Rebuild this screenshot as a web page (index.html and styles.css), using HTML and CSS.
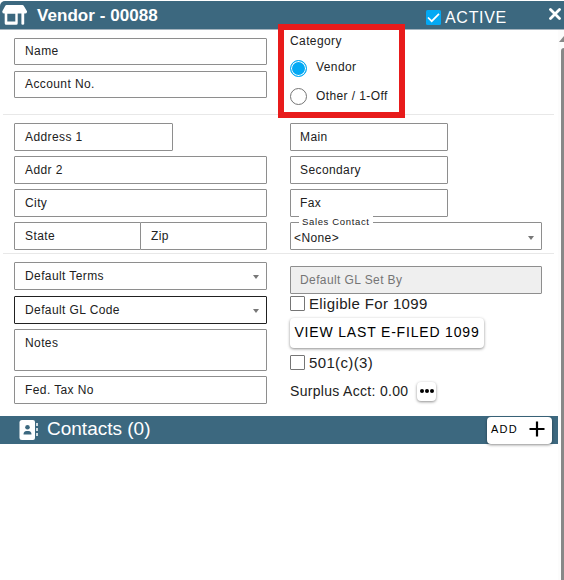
FILE: index.html
```html
<!DOCTYPE html>
<html lang="en">
<head>
<meta charset="utf-8">
<title>Vendor - 00088</title>
<link rel="stylesheet" href="styles.css">
</head>
<body>
<main class="dialog">
  <header class="titlebar">
    <svg class="store" viewBox="0 0 25 21" width="25" height="21" fill="#fff"><path d="M4.500 0h16q.8 0 1.200.7L25 6.200Q25.200 8.500 23 8.500H2.500Q0 8.500.3 6.200L3.300.7Q3.700 0 4.500 0z"/><path fill-rule="evenodd" d="M2.700 8h13v10.200q0 1.500-1.500 1.500h-10q-1.500 0-1.500-1.500zM5.300 8.500v8h8v-8zM19.400 8h2.800v11q0 .8-1.400.8t-1.400-.8z"/></svg>
    <h1 class="title">Vendor - 00088</h1>
    <label class="active"><svg viewBox="0 0 15 15" width="15" height="15"><rect width="15" height="15" rx="1.500" fill="#03a9f4"/><path d="M2 7.500l3.700 3.700L13 3.800" fill="none" stroke="#fff" stroke-width="1.700"/></svg><span>ACTIVE</span></label>
    <svg class="close" viewBox="0 0 12 12" width="12" height="12"><path d="M1.500 1.500l9 9m0-9l-9 9" stroke="#fff" stroke-width="2.800" stroke-linecap="round"/></svg>
  </header>
  <div class="content">
    <section class="section identity">
      <div class="column">
        <div class="field">Name</div>
        <div class="field">Account No.</div>
      </div>
      <div class="category">
        <div class="legend">Category</div>
        <div class="option"><i class="radio checked"></i><span>Vendor</span></div>
        <div class="option"><i class="radio"></i><span>Other / 1-Off</span></div>
      </div>
    </section>
    <section class="section address">
      <div class="column">
        <div class="field street">Address 1</div>
        <div class="field">Addr 2</div>
        <div class="field">City</div>
        <div class="split"><div class="field state">State</div><div class="field zip">Zip</div></div>
      </div>
      <div class="column phones">
        <div class="field phone">Main</div>
        <div class="field phone">Secondary</div>
        <div class="field phone">Fax</div>
        <div class="field select sales"><span class="floating">Sales Contact</span><span>&lt;None&gt;</span><i class="caret"></i></div>
      </div>
    </section>
    <section class="section accounting">
      <div class="column">
        <div class="field select terms">Default Terms<i class="caret"></i></div>
        <div class="field select focused">Default GL Code<i class="caret"></i></div>
        <div class="field notes">Notes</div>
        <div class="field">Fed. Tax No</div>
      </div>
      <div class="tax">
        <div class="field disabled">Default GL Set By</div>
        <label class="check eligible"><i class="box"></i><span>Eligible For 1099</span></label>
        <button class="button view">VIEW LAST E-FILED 1099</button>
        <label class="check charity"><i class="box"></i><span>501(c)(3)</span></label>
        <div class="surplus"><span>Surplus Acct: 0.00</span><button class="button more"><i></i><i></i><i></i></button></div>
      </div>
    </section>
    <section class="contacts">
      <svg class="book" viewBox="0 0 20 20" width="20" height="20"><path d="M3 0h11q2 0 2 2v16q0 2-2 2H3q-2.500 0-2.500-2.500v-15Q.5 0 3 0z" fill="#fff"/><path d="M18 3v3m0 2v3m0 2v3" stroke="#fff" stroke-width="1.500"/><circle cx="8.500" cy="7.300" r="2.300" fill="#3c687f"/><path d="M4.500 14.500q0-3.500 3-3.500h2q3 0 3 3.500z" fill="#3c687f"/></svg>
      <h2>Contacts (0)</h2>
      <button class="button add"><span>ADD</span><svg viewBox="0 0 16 16" width="16" height="16"><path d="M8 .5v15M.5 8h15" stroke="#000" stroke-width="2.200"/></svg></button>
    </section>
  </div>
  <div class="scrollbar"><i class="up"></i><i class="thumb"></i></div>
</main>
</body>
</html>
```
FILE: styles.css
```css
* { box-sizing: border-box; }
body {
  margin: 0;
  background: #fff;
  color: #212121;
  font: 12px/14px "Liberation Sans", Arial, sans-serif;
  letter-spacing: 0.4px;
}
.dialog {
  position: relative;
  height: 580px;
  overflow: hidden;
}
.titlebar {
  display: flex;
  align-items: flex-start;
  height: 29px;
  margin-top: 1px;
  padding: 4px 3px 0 2px;
  background: #3c687f;
  border-bottom: 1px solid #a4b3bd;
  border-top-left-radius: 5px;
  color: #fff;
}
.title {
  flex: 1;
  margin: 1px 0 0 10px;
  font-size: 17px;
  line-height: 20px;
  letter-spacing: 0.05px;
}
.active {
  display: flex;
  gap: 4px;
  margin: 4px 42px 0 0;
  font-size: 16px;
  line-height: 18px;
  letter-spacing: 0.7px;
}
.active svg { margin-top: 1px; }
.close { margin-top: 3px; }
.content { width: 558px; }
.section {
  display: grid;
  grid-template-columns: 253px 252px;
  column-gap: 23px;
  width: 551px;
  margin-left: 3px;
  padding-left: 11px;
  border-bottom: 1px solid #e8e8e8;
}
.identity { height: 85px; padding-top: 8px; }
.address { height: 139px; padding-top: 8px; }
.accounting { height: 162px; padding-top: 8px; border-bottom: 0; }
.column {
  display: flex;
  flex-direction: column;
  gap: 5px;
}
.identity .column { gap: 6px; }
.field {
  flex: none;
  height: 28px;
  padding: 6px 10px;
  border: 1px solid #8e8e8e;
  border-radius: 1px;
}
.identity .field { height: 27px; padding-top: 5px; }
.street { width: 159px; }
.split { display: flex; }
.state { width: 127px; }
.zip { width: 127px; margin-left: -1px; }
.phones .field { padding-left: 9px; }
.phone { width: 158px; }
.select {
  position: relative;
  display: flex;
  justify-content: space-between;
}
.terms { margin-bottom: 1px; }
.focused { border-color: #212121; }
.notes { height: 42px; }
.caret {
  width: 0;
  height: 0;
  margin: 6px -3px 0 0;
  border: 3.5px solid transparent;
  border-top: 4px solid #777;
  border-bottom: 0;
}
.phones .sales { padding: 8px 10px 0 3px; }
.sales .caret { margin-top: 5px; }
.floating {
  position: absolute;
  top: -7px;
  left: 8px;
  padding: 0 3px;
  background: #fff;
  font-size: 9.5px;
  line-height: 12px;
  letter-spacing: 0.65px;
}
.category {
  position: relative;
  z-index: 1;
  width: 127px;
  height: 94px;
  margin: -14px 0 0 -12px;
  padding: 4px 0 0 6px;
  border: 6px solid #e81b1b;
}
.legend { margin-bottom: 4px; }
.option {
  display: flex;
  align-items: center;
  gap: 9px;
  height: 29px;
}
.radio {
  width: 17px;
  height: 17px;
  margin-top: 1px;
  border: 1px solid #757575;
  border-radius: 50%;
}
.checked {
  margin-top: 3px;
  border-color: #03a9f4;
  background: #03a9f4;
  box-shadow: inset 0 0 0 1px #fff;
}
.tax { padding-top: 4px; }
.disabled {
  padding-left: 9px;
  background: #efefef;
  color: #757575;
}
.check {
  display: flex;
  gap: 4px;
  font-size: 15px;
  line-height: 17px;
  letter-spacing: 0.36px;
}
.box {
  width: 15px;
  height: 15px;
  border: 1px solid #757575;
  border-radius: 1px;
}
.eligible { margin-top: 2px; height: 15px; }
.charity { margin-top: 7px; height: 15px; }
.check span { margin-top: -1px; }
.button {
  display: flex;
  align-items: center;
  justify-content: center;
  padding: 0;
  border: 0;
  border-radius: 4px;
  background: #fff;
  color: #000;
  font-family: inherit;
  white-space: nowrap;
  box-shadow: 0 1px 3px rgba(0, 0, 0, 0.45);
}
.view {
  width: 194px;
  height: 30px;
  margin-top: 7px;
  padding-bottom: 2px;
  font-size: 14px;
  letter-spacing: 0.82px;
}
.surplus {
  display: flex;
  align-items: center;
  gap: 9px;
  height: 20px;
  margin-top: 11px;
  font-size: 14px;
  letter-spacing: 0.31px;
}
.more { width: 19px; height: 19px; gap: 1px; }
.more i {
  width: 4px;
  height: 4px;
  border-radius: 50%;
  background: #000;
}
.contacts {
  display: flex;
  align-items: center;
  height: 28px;
  padding: 0 6px 0 19px;
  background: #3c687f;
  color: #fff;
}
.contacts h2 {
  flex: 1;
  margin: -3px 0 0 8px;
  font-size: 19px;
  font-weight: 400;
  line-height: 22px;
  letter-spacing: 0;
}
.add {
  width: 65px;
  height: 27px;
  gap: 11px;
  padding: 0 3px 2px 0;
  font-size: 11px;
  letter-spacing: 1.2px;
}
.scrollbar {
  position: absolute;
  top: 30px;
  right: 0;
  width: 6px;
  height: 550px;
  background: #fcfcfc;
}
.thumb {
  position: absolute;
  top: 18px;
  right: 0;
  width: 3px;
  height: 532px;
  background: #888;
  border-top-left-radius: 3px;
}
.up {
  position: absolute;
  top: 6px;
  right: -5px;
  border: 5px solid transparent;
  border-top: 0;
  border-bottom: 6px solid #888;
}
```
